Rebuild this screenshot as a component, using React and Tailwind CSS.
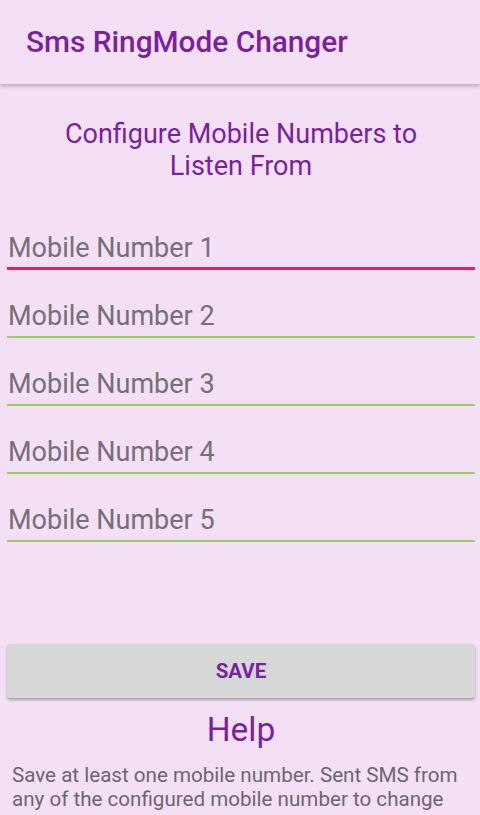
import React from "react";

const fields = ["Mobile Number 1", "Mobile Number 2", "Mobile Number 3", "Mobile Number 4", "Mobile Number 5"];

export default function App() {
  return (
    <div className="w-[480px] h-[815px] overflow-hidden bg-[#f3e0f4] font-['Roboto',sans-serif]">
      <header className="h-[84px] flex items-center px-[26px] bg-[#f3e0f4] shadow-[0_2px_4px_rgba(0,0,0,0.25)] relative">
        <h1 className="text-[29.8px] font-medium text-[#7b1fa2]">Sms RingMode Changer</h1>
      </header>

      <div className="pl-[7px] pr-[5px]">
        <p className="mt-[34px] text-center text-[27px] leading-[32px] text-[#7b1fa2]">
          Configure Mobile Numbers to
          <br />
          Listen From
        </p>

        <div className="mt-[20px] flex flex-col">
          {fields.map((f, i) => (
            <div key={f} className="h-[68px] flex flex-col justify-end">
              <div
                className={
                  i === 0
                    ? "pl-[1px] pb-[2px] text-[27px] leading-[34px] text-[#766f79] border-b-[3px] border-[#e91e63]"
                    : "pl-[1px] pb-[3px] text-[27px] leading-[34px] text-[#766f79] border-b-2 border-[#9ccc65]"
                }
              >
                {f}
              </div>
            </div>
          ))}
        </div>

        <button className="mt-[102px] w-full h-[54px] rounded-[3px] bg-[#d6d7d7] shadow-[0_2px_3px_rgba(0,0,0,0.3)] text-[20.5px] font-bold text-[#7b1fa2]">
          SAVE
        </button>

        <h2 className="mt-[12px] text-center text-[33.5px] leading-[40px] text-[#7b1fa2]">Help</h2>

        <p className="mt-[13px] pl-[5px] pr-[3px] text-[20.6px] leading-[24px] text-[#6c6570]">
          Save at least one mobile number. Sent SMS from any of the configured mobile number to change
        </p>
      </div>
    </div>
  );
}
